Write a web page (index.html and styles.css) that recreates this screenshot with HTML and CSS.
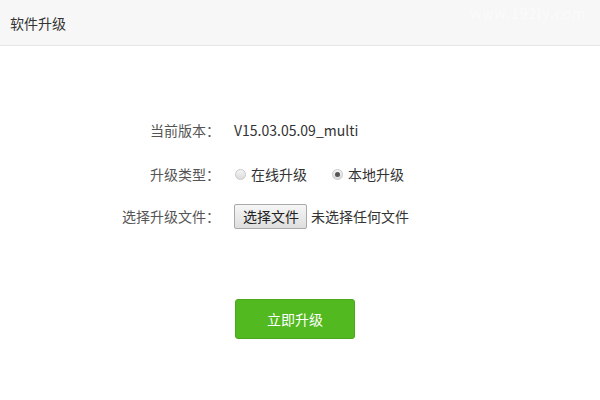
FILE: index.html
```html
<!DOCTYPE html>
<html lang="zh-CN">
<head>
  <meta charset="UTF-8">
  <title>软件升级</title>
  <link rel="stylesheet" href="styles.css">
</head>
<body>

  <!-- Header -->
  <header class="page-head">
    <h1>软件升级</h1>
    <span class="watermark">www.192ly.com</span>
  </header>

  <!-- Upgrade Form -->
  <div class="upgrade-form">
    <div class="form-row">
      <label class="form-label">当前版本：</label>
      <span class="form-value">V15.03.05.09_multi</span>
    </div>

    <div class="form-row">
      <label class="form-label">升级类型：</label>
      <div class="form-value radios">
        <label class="radio"><span class="dot"></span>在线升级</label>
        <label class="radio"><span class="dot checked"></span>本地升级</label>
      </div>
    </div>

    <div class="form-row">
      <label class="form-label">选择升级文件：</label>
      <div class="form-value file-pick">
        <span class="file-btn">选择文件</span>
        <span class="file-name">未选择任何文件</span>
      </div>
    </div>

    <div class="form-actions">
      <button class="btn-submit">立即升级</button>
    </div>
  </div>

</body>
</html>
```

FILE: styles.css
```css
/* Basic Reset */
* {
  margin: 0;
  padding: 0;
  box-sizing: border-box;
}

body {
  font-family: "Noto Sans CJK SC", "Noto Sans", sans-serif;
  font-size: 14px;
  color: #333;
  background-color: #fff;
}

/* Header */
.page-head {
  position: relative;
  height: 46px;
  display: flex;
  align-items: center;
  padding-left: 10px;
  background-color: #f7f7f7;
  border-bottom: 1px solid #e6e6e6;
}

.page-head h1 {
  font-size: 14px;
  font-weight: normal;
  color: #333;
}

.watermark {
  position: absolute;
  top: 3px;
  right: 14px;
  font-size: 14px;
  color: #fbfbfb;
  letter-spacing: 1px;
}

/* Form */
.upgrade-form {
  padding-top: 72px;
}

.form-row {
  display: flex;
  align-items: center;
  height: 24px;
  margin-bottom: 20px;
}

.form-row:nth-child(2) {
  margin-bottom: 18px;
}

.form-label {
  width: 220px;
  text-align: right;
  color: #555;
}

.form-value {
  margin-left: 14px;
  color: #333;
}

.radios {
  display: flex;
  gap: 24px;
}

.radio {
  display: flex;
  align-items: center;
}

.radio .dot {
  width: 11px;
  height: 11px;
  border-radius: 50%;
  border: 1px solid #c8c8c8;
  background: linear-gradient(#f4f4f4, #dcdcdc);
  margin: 0 5px 0 1px;
  position: relative;
}

.radio .dot.checked::after {
  content: "";
  position: absolute;
  top: 2px;
  left: 2px;
  width: 5px;
  height: 5px;
  border-radius: 50%;
  background-color: #555;
}

.file-pick {
  display: flex;
  align-items: center;
}

.file-btn {
  display: inline-block;
  height: 25px;
  line-height: 23px;
  padding: 0 7px 0 8px;
  border: 1px solid #a9a9a9;
  border-radius: 2px;
  background: linear-gradient(#f6f6f6, #dedede);
  color: #222;
  margin-right: 4px;
}

.form-actions {
  padding: 51px 0 0 235px;
}

.btn-submit {
  width: 120px;
  height: 40px;
  border: 1px solid #4aa81a;
  border-radius: 3px;
  background-color: #52b920;
  color: #fff;
  font-family: inherit;
  font-size: 14px;
}
```
